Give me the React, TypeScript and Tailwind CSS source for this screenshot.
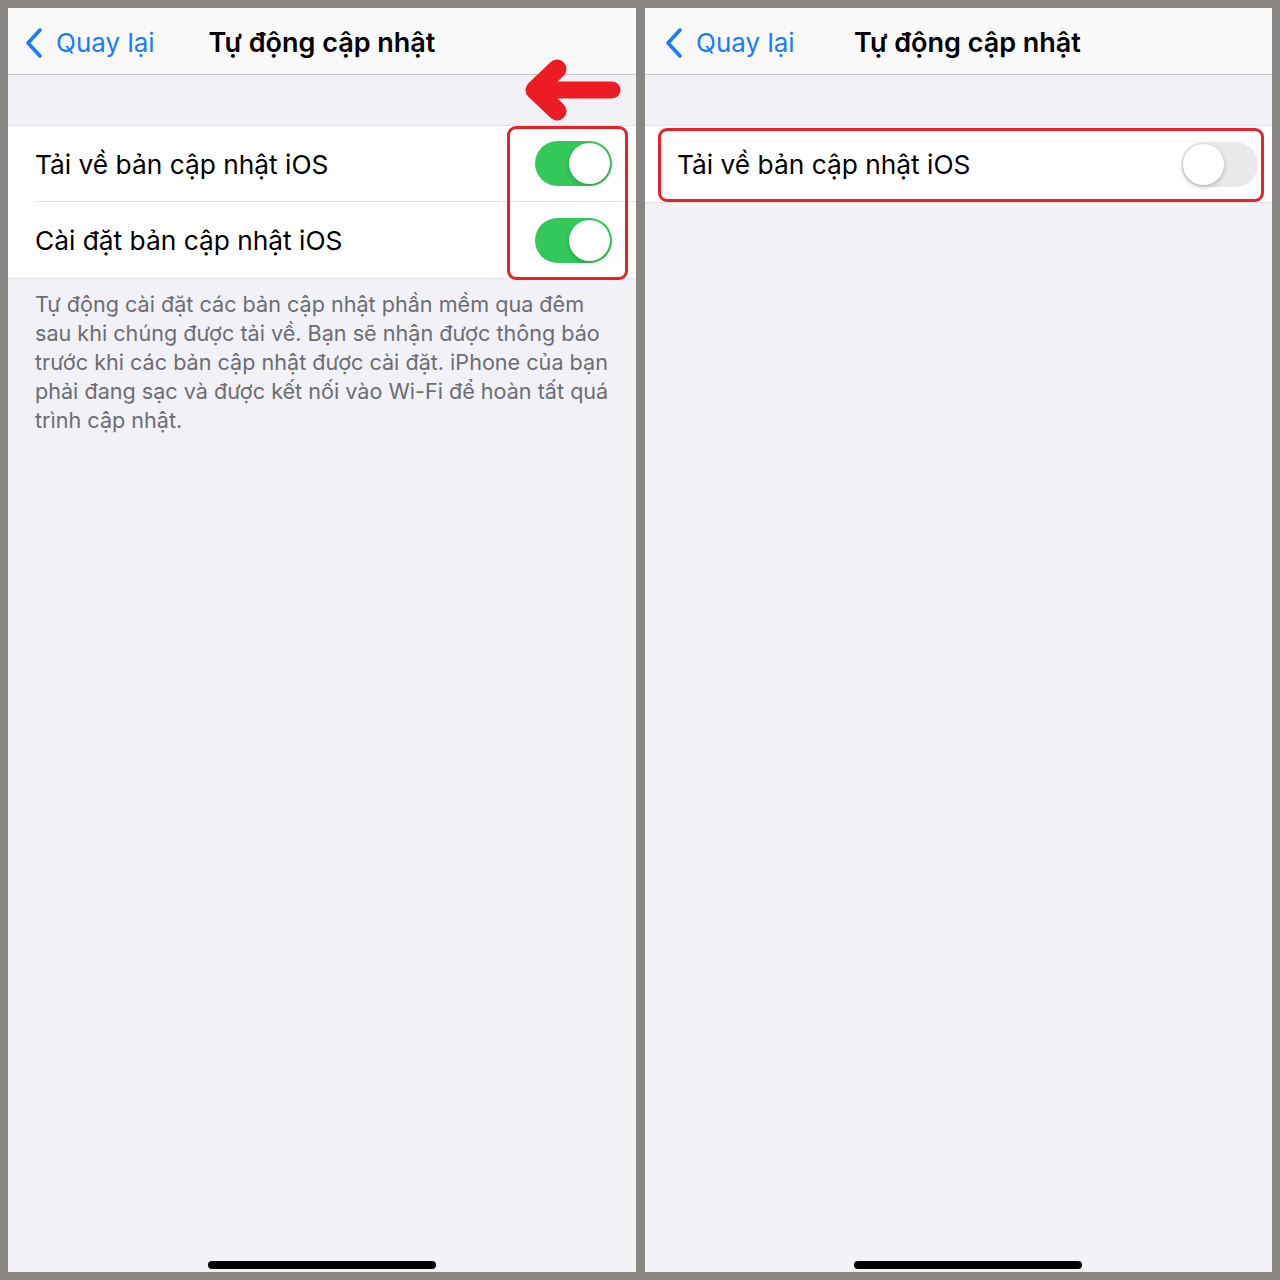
import React from 'react';

const FONT = { fontFamily: 'Inter, "Noto Sans", "Liberation Sans", sans-serif' };

function Toggle({ on }: { on: boolean }) {
  if (on) {
    return (
      <div className="relative h-[45px] w-[77px] shrink-0 rounded-full bg-[#34c759]">
        <div className="absolute right-[2px] top-[2px] h-[41px] w-[41px] rounded-full bg-white shadow-[0_2px_4px_rgba(0,0,0,0.2)]" />
      </div>
    );
  }
  return (
    <div className="relative h-[45px] w-[77px] shrink-0 rounded-full bg-[#e9e9eb]">
      <div className="absolute left-[2px] top-[2px] h-[41px] w-[41px] rounded-full bg-white shadow-[0_2px_5px_rgba(0,0,0,0.22)]" />
    </div>
  );
}

function NavBar({ shifted }: { shifted?: boolean }) {
  return (
    <div className="relative flex h-[67px] shrink-0 items-center border-b border-[#c8c7cc] bg-[#f9f9fa] pt-[3px]">
      <div className={`flex items-center text-[#1a7cf6] ${shifted ? 'pl-[19px]' : 'pl-[16px]'}`}>
        <svg width="20" height="32" viewBox="0 0 20 32" fill="none">
          <polyline points="16,3 4,16 16,29" stroke="#1a7cf6" strokeWidth="3.6" strokeLinecap="round" strokeLinejoin="round" />
        </svg>
        <span className="ml-[12px] text-[26px] leading-none">Quay lại</span>
      </div>
      <div className={`absolute inset-x-0 top-0 flex h-full items-center justify-center pt-[3px] ${shifted ? 'pl-[18px]' : ''}`}>
        <span className="text-[27px] font-semibold leading-none text-black">Tự động cập nhật</span>
      </div>
    </div>
  );
}

function Row({ label, on, last, shifted }: { label: string; on: boolean; last?: boolean; shifted?: boolean }) {
  return (
    <div className={`flex h-[76px] items-center bg-white ${shifted ? 'pl-[32px]' : 'pl-[27px]'}`}>
      <div
        className={`flex h-full flex-1 items-center ${shifted ? 'pr-[14px]' : 'pr-[24px]'} ${
          last ? '' : 'border-b border-[#e3e3e6]'
        }`}
      >
        <span className="flex-1 pt-[3px] text-[26.3px] leading-none text-black">{label}</span>
        <Toggle on={on} />
      </div>
    </div>
  );
}

function HomeBar({ shifted }: { shifted?: boolean }) {
  return (
    <div className={`flex justify-center pb-[3px] ${shifted ? 'pl-[18px]' : ''}`}>
      <div className="h-[8px] w-[228px] rounded-full bg-black" />
    </div>
  );
}

function LeftPhone() {
  return (
    <div className="relative flex h-full w-[628px] flex-col bg-[#f1f1f6]">
      <NavBar />
      <div className="h-[50px] shrink-0" />
      <div className="border-y border-[#e3e3e6]">
        <Row label="Tải về bản cập nhật iOS" on />
        <Row label="Cài đặt bản cập nhật iOS" on last />
      </div>
      <p className="px-[27px] pt-[11px] text-[21.6px] leading-[29px] text-[#6d6d72]">
        Tự động cài đặt các bản cập nhật phần mềm qua đêm sau khi chúng được tải về. Bạn sẽ nhận được thông báo
        trước khi các bản cập nhật được cài đặt. iPhone của bạn phải đang sạc và được kết nối vào Wi-Fi để hoàn tất quá
        trình cập nhật.
      </p>
      <div className="flex-1" />
      <HomeBar />

      {/* annotations */}
      <div className="absolute left-[499px] top-[118px] h-[154px] w-[121px] rounded-[9px] border-[3px] border-[#e8202a]" />
      <svg className="absolute left-[510px] top-[48px]" width="110" height="80" viewBox="510 48 110 80">
        <line x1="540" y1="82" x2="604" y2="82" stroke="#ed1c24" strokeWidth="17" strokeLinecap="round" />
        <polyline points="549,61 527,82 549,103" stroke="#ed1c24" strokeWidth="19" strokeLinecap="round" strokeLinejoin="round" fill="none" />
        <polygon points="527,82 549,61 549,103" fill="#ed1c24" />
      </svg>
    </div>
  );
}

function RightPhone() {
  return (
    <div className="relative flex h-full w-[627px] flex-col bg-[#f1f1f6]">
      <NavBar shifted />
      <div className="h-[50px] shrink-0" />
      <div className="border-y border-[#e3e3e6]">
        <Row label="Tải về bản cập nhật iOS" on={false} last shifted />
      </div>
      <div className="flex-1" />
      <HomeBar shifted />
      <div className="absolute left-[13px] top-[120px] h-[74px] w-[606px] rounded-[9px] border-[3px] border-[#e8202a]" />
    </div>
  );
}

export default function App() {
  return (
    <div className="flex h-[1280px] w-[1280px] gap-[9px] bg-[#8a8683] p-[8px]" style={FONT}>
      <LeftPhone />
      <RightPhone />
    </div>
  );
}
